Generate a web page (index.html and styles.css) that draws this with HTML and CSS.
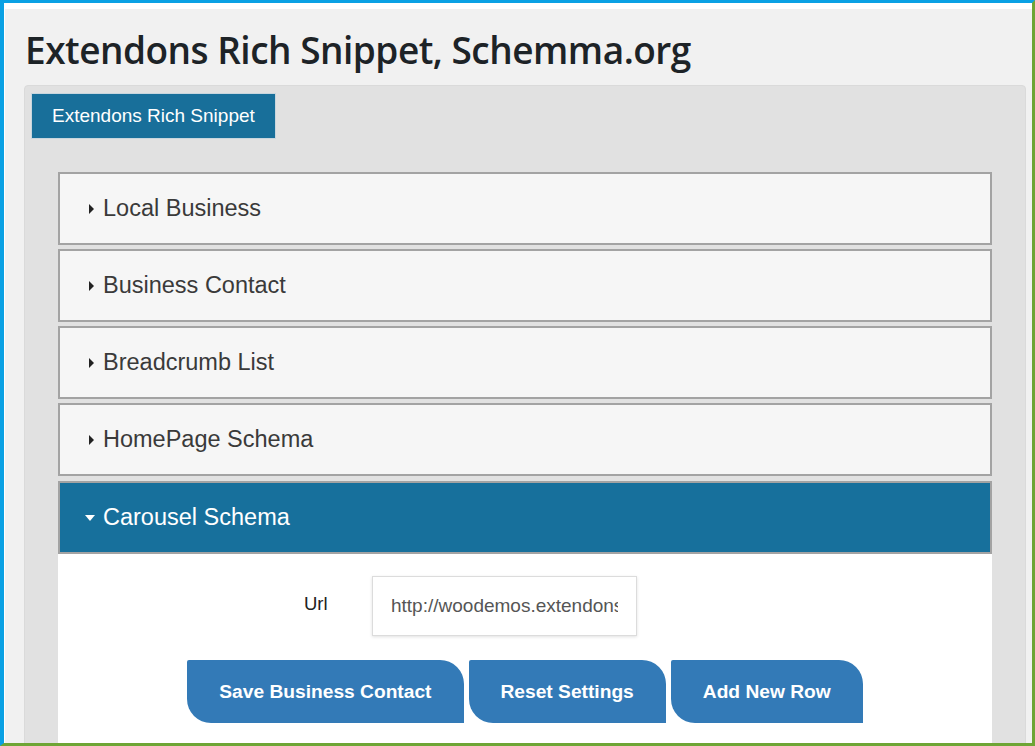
FILE: index.html
```html
<!DOCTYPE html>
<html lang="en">
  <head>
    <meta charset="UTF-8" />
    <title>Extendons Rich Snippet, Schemma.org</title>
    <link rel="stylesheet" href="styles.css">
  </head>
  <body>
    <div id="frame">
      <div id="page">
        <h1 class="page-title">Extendons Rich Snippet, Schemma.org</h1>

        <div id="panel">
          <div class="tabs">
            <a class="tab tab-sel">Extendons Rich Snippet</a>
          </div>

          <div id="accordion">
            <div class="acc-head"><span class="arrow"></span>Local Business</div>
            <div class="acc-head"><span class="arrow"></span>Business Contact</div>
            <div class="acc-head"><span class="arrow"></span>Breadcrumb List</div>
            <div class="acc-head"><span class="arrow"></span>HomePage Schema</div>
            <div class="acc-head acc-open"><span class="arrow"></span>Carousel Schema</div>

            <div class="acc-body">
              <div class="field-row">
                <label class="field-label">Url</label>
                <input class="field-input" type="text" value="http://woodemos.extendons.com" />
              </div>
              <div class="btn-row">
                <button class="btn">Save Business Contact</button>
                <button class="btn">Reset Settings</button>
                <button class="btn">Add New Row</button>
              </div>
            </div>
          </div>
        </div>
      </div>
    </div>
  </body>
</html>
```

FILE: styles.css
```css
* {
  margin: 0;
  padding: 0;
  box-sizing: border-box;
}

body {
  font-family: "Liberation Sans", Arial, sans-serif;
  background: #fff;
}

#frame {
  width: 1035px;
  height: 746px;
  border-top: 3px solid #0aa1e4;
  border-left: 4px solid #0aa1e4;
  border-right: 3px solid #6ea535;
  border-bottom: 3px solid #6ea535;
  overflow: hidden;
}

#page {
  height: 100%;
  background: #f1f1f1;
  border-top: 6px solid #fff;
  border-left: 1px solid #fff;
  padding: 0 6px 0 19px;
  overflow: hidden;
}

.page-title {
  font-family: "Open Sans", "Noto Sans", sans-serif;
  font-weight: 600;
  font-size: 37px;
  letter-spacing: -0.5px;
  color: #1d2327;
  line-height: 50px;
  padding: 16px 0 10px 1px;
}

#panel {
  background: #e1e1e1;
  border: 1px solid #dadada;
  border-radius: 4px 4px 0 0;
  padding: 7px 33px 0 33px;
  height: 700px;
}

.tabs {
  display: flex;
  margin-left: -27px;
  margin-bottom: 33px;
}

.tab {
  display: block;
  background: #186f9a;
  color: #fff;
  font-size: 19px;
  line-height: 44px;
  padding: 0 20px;
  border: 1px solid #c8d6de;
}

.acc-head {
  display: flex;
  align-items: center;
  height: 73px;
  margin-bottom: 4px;
  background: #f6f6f6;
  border: 2px solid #a3a3a3;
  padding-left: 29px;
  font-size: 23.5px;
  color: #3a3a3a;
}

.arrow {
  width: 0;
  height: 0;
  border-top: 5px solid transparent;
  border-bottom: 5px solid transparent;
  border-left: 5px solid #222;
  margin-right: 9px;
}

.acc-open {
  background: #17709c;
  color: #fff;
  margin-top: 5px;
  margin-bottom: 0;
  padding-left: 25px;
}

.acc-open .arrow {
  border-left: 5px solid transparent;
  border-right: 5px solid transparent;
  border-top: 6px solid #fff;
  border-bottom: 0;
  margin-right: 8px;
}

.acc-body {
  background: #fff;
  padding: 22px 0 40px;
}

.field-row {
  display: flex;
  align-items: center;
  padding-left: 246px;
}

.field-label {
  width: 68px;
  font-size: 18.5px;
  color: #222;
  margin-top: -4px;
}

.field-input {
  width: 265px;
  height: 60px;
  border: 1px solid #dcdcdc;
  box-shadow: 0 1px 3px rgba(0, 0, 0, 0.12);
  padding: 0 18px;
  font-family: "Liberation Sans", Arial, sans-serif;
  font-size: 19px;
  color: #555;
  outline: none;
}

.btn-row {
  display: flex;
  justify-content: center;
  gap: 5px;
  margin-top: 24px;
}

.btn {
  height: 63px;
  padding: 0 32px;
  background: #337ab7;
  color: #fff;
  border: none;
  border-radius: 2px 24px 0 24px;
  font-family: "Liberation Sans", Arial, sans-serif;
  font-weight: bold;
  font-size: 19.2px;
}
```
